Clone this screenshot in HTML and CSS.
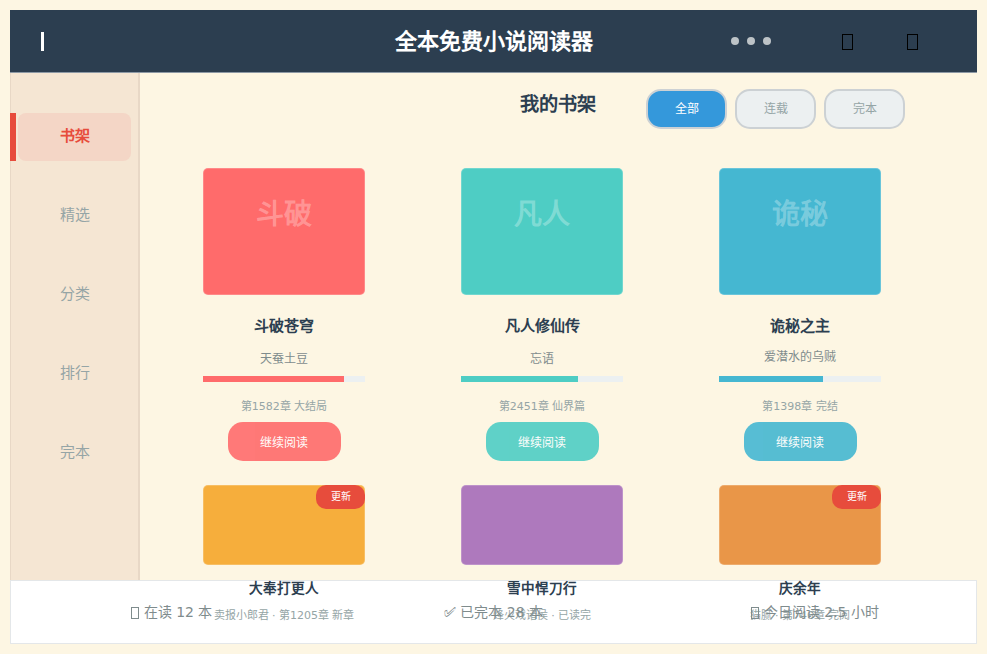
FILE: index.html
```html
<!DOCTYPE html>
<html lang="zh-CN">
<head>
    <meta charset="UTF-8">
    <meta name="viewport" content="width=device-width, initial-scale=1.0">
    <title>全本免费小说阅读器</title>
    <link rel="stylesheet" href="styles.css">
</head>
<body>
    <header class="topbar">
        <div class="menu-btn"></div>
        <h1 class="app-title">全本免费小说阅读器</h1>
        <div class="top-actions">
            <div class="dots"><span></span><span></span><span></span></div>
            <span class="top-slot"><i class="tofu"></i></span>
            <span class="top-slot"><i class="tofu"></i></span>
        </div>
    </header>

    <div class="layout">
        <nav class="sidebar">
            <a class="nav-item active">书架</a>
            <a class="nav-item">精选</a>
            <a class="nav-item">分类</a>
            <a class="nav-item">排行</a>
            <a class="nav-item">完本</a>
        </nav>

        <main class="shelf">
            <div class="shelf-head">
                <h2 class="shelf-title">我的书架</h2>
                <div class="filters">
                    <button class="filter on">全部</button>
                    <button class="filter">连载</button>
                    <button class="filter">完本</button>
                </div>
            </div>

            <div class="book-grid">
                <div class="book">
                    <div class="cover red"><span class="cover-text">斗破</span></div>
                    <div class="book-name">斗破苍穹</div>
                    <div class="book-author">天蚕土豆</div>
                    <div class="progress"><div class="progress-fill red" style="width: 87%"></div></div>
                    <div class="book-chapter">第1582章 大结局</div>
                    <button class="read-btn red">继续阅读</button>
                </div>
                <div class="book">
                    <div class="cover teal"><span class="cover-text">凡人</span></div>
                    <div class="book-name">凡人修仙传</div>
                    <div class="book-author">忘语</div>
                    <div class="progress"><div class="progress-fill teal" style="width: 72%"></div></div>
                    <div class="book-chapter">第2451章 仙界篇</div>
                    <button class="read-btn teal">继续阅读</button>
                </div>
                <div class="book">
                    <div class="cover blue"><span class="cover-text">诡秘</span></div>
                    <div class="book-name">诡秘之主</div>
                    <div class="book-author raised">爱潜水的乌贼</div>
                    <div class="progress"><div class="progress-fill blue" style="width: 64%"></div></div>
                    <div class="book-chapter">第1398章 完结</div>
                    <button class="read-btn blue">继续阅读</button>
                </div>

                <div class="book small">
                    <div class="cover orange"><span class="badge">更新</span></div>
                    <div class="book-name">大奉打更人</div>
                    <div class="book-sub">卖报小郎君 · 第1205章 新章</div>
                </div>
                <div class="book small">
                    <div class="cover purple"></div>
                    <div class="book-name">雪中悍刀行</div>
                    <div class="book-sub">烽火戏诸侯 · 已读完</div>
                </div>
                <div class="book small">
                    <div class="cover amber"><span class="badge">更新</span></div>
                    <div class="book-name">庆余年</div>
                    <div class="book-sub">猫腻 · 第746章 完阅</div>
                </div>
            </div>
        </main>
    </div>

    <footer class="statusbar">
        <span class="stat"><i class="tofu"></i> 在读 12 本</span>
        <span class="stat">✅&#xFE0E; 已完本 28 本</span>
        <span class="stat"><i class="tofu"></i> 今日阅读 2.5 小时</span>
    </footer>
</body>
</html>
```

FILE: styles.css
```css
* {
    box-sizing: border-box;
}

html, body {
    height: 100%;
}

body {
    margin: 0;
    padding: 10px;
    background-color: #fdf6e3;
    font-family: "DejaVu Sans", sans-serif;
    overflow: hidden;
}

.topbar {
    display: grid;
    grid-template-columns: 1fr auto 1fr;
    align-items: center;
    height: 63px;
    background-color: #2c3e50;
    border-bottom: 1px solid #8d99a5;
}

.menu-btn {
    width: 3px;
    height: 19px;
    margin-left: 31px;
    background-color: #fff;
}

.app-title {
    margin: 0 0 4px;
    color: #fff;
    font-size: 22px;
    font-weight: bold;
}

.top-actions {
    display: flex;
    align-items: center;
    padding-left: 138px;
}

.dots {
    display: flex;
    gap: 8px;
    width: 111px;
}

.dots span {
    width: 8px;
    height: 8px;
    border-radius: 50%;
    background-color: #bdc3c7;
}

.top-slot {
    display: flex;
    width: 65px;
    padding-top: 2px;
}

/* missing-glyph box */
.tofu {
    display: inline-block;
    width: 11px;
    height: 16px;
    border: 1px solid #000;
}

.stat .tofu {
    width: 8px;
    height: 12px;
    vertical-align: -2px;
    border-color: #7f8c8d;
}

.layout {
    display: flex;
    height: 507px;
}

.sidebar {
    flex: 0 0 130px;
    display: flex;
    flex-direction: column;
    gap: 31px;
    padding: 40px 7px 0;
    background-color: #f5e6d3;
    border-left: 1px solid #e8d8c6;
    border-right: 2px solid #e8d8c6;
}

.nav-item {
    position: relative;
    display: flex;
    align-items: center;
    justify-content: center;
    height: 48px;
    padding-bottom: 5px;
    color: #95a5a6;
    font-size: 15px;
    border-radius: 8px;
}

.nav-item.active {
    color: #e74c3c;
    font-weight: bold;
    background-color: #f4d6c6;
}

.nav-item.active::before {
    content: "";
    position: absolute;
    left: -8px;
    top: 0;
    width: 6px;
    height: 48px;
    background-color: #e74c3c;
}

.shelf {
    flex: 1;
    padding: 16px 0 0 63px;
}

.shelf-head {
    display: flex;
    align-items: flex-start;
    height: 40px;
    padding-left: 317px;
}

.shelf-title {
    margin: 0 50px 0 0;
    color: #2c3e50;
    font-size: 19.2px;
    font-weight: bold;
    white-space: nowrap;
}

.filters {
    display: flex;
    gap: 8px;
}

.filter {
    width: 81px;
    height: 40px;
    padding: 0 0 3px;
    color: #95a5a6;
    font: inherit;
    font-size: 12px;
    background-color: #ecf0f1;
    border: 2px solid #ccd1d4;
    border-radius: 15px;
}

.filter.on {
    color: #fff;
    background-color: #3498db;
}

.book-grid {
    display: grid;
    grid-template-columns: repeat(3, 162px);
    column-gap: 96px;
    row-gap: 24px;
    margin-top: 39px;
}

.book {
    display: flex;
    flex-direction: column;
    align-items: center;
}

.cover {
    position: relative;
    display: flex;
    justify-content: center;
    width: 162px;
    height: 127px;
    padding-top: 28px;
    border: 1px solid rgba(255, 255, 255, 0.2);
    border-radius: 5px;
}

.small .cover {
    height: 80px;
}

.cover-text {
    color: rgba(255, 255, 255, 0.3);
    font-size: 28px;
    font-weight: bold;
    line-height: 36px;
}

.badge {
    position: absolute;
    top: -1px;
    right: -1px;
    width: 49px;
    height: 24px;
    color: #fff;
    font-size: 10px;
    line-height: 24px;
    text-align: center;
    background-color: #e74c3c;
    border-radius: 10px;
}

.cover.red, .progress-fill.red, .read-btn.red { background-color: #ff6b6b; }
.cover.teal, .progress-fill.teal, .read-btn.teal { background-color: #4ecdc4; }
.cover.blue, .progress-fill.blue, .read-btn.blue { background-color: #45b7d1; }
.cover.orange { background-color: #f6ae3c; }
.cover.purple { background-color: #ae79bd; }
.cover.amber { background-color: #e99648; }

.book-name {
    margin-top: 22px;
    color: #2c3e50;
    font-size: 15px;
    font-weight: bold;
    line-height: 18px;
}

.book-author {
    margin-top: 16px;
    margin-bottom: 9px;
    color: #7f8c8d;
    font-size: 12px;
    line-height: 16px;
}

.book-author.raised {
    margin-top: 14px;
    margin-bottom: 11px;
}

.progress {
    width: 162px;
    height: 6px;
    background-color: #ecf0f1;
}

.progress-fill {
    height: 100%;
}

.book-chapter {
    margin-top: 18px;
    color: #95a5a6;
    font-size: 11px;
    line-height: 14px;
}

.read-btn {
    width: 113px;
    height: 39px;
    margin-top: 8px;
    padding: 0;
    color: #fff;
    font: inherit;
    font-size: 12px;
    border: none;
    border-radius: 15px;
    opacity: 0.9;
}

.small .book-name {
    margin-top: 15px;
    font-size: 13.6px;
    line-height: 16px;
}

.book-sub {
    margin-top: 13px;
    color: #95a5a6;
    font-size: 11px;
    line-height: 14px;
    white-space: nowrap;
}

.statusbar {
    display: grid;
    grid-template-columns: repeat(3, 1fr);
    justify-items: center;
    align-items: center;
    height: 64px;
    padding-bottom: 2px;
    background-color: #fff;
    border: 1px solid #e4e7e9;
}

.stat {
    color: #7f8c8d;
    font-size: 14px;
}
```
